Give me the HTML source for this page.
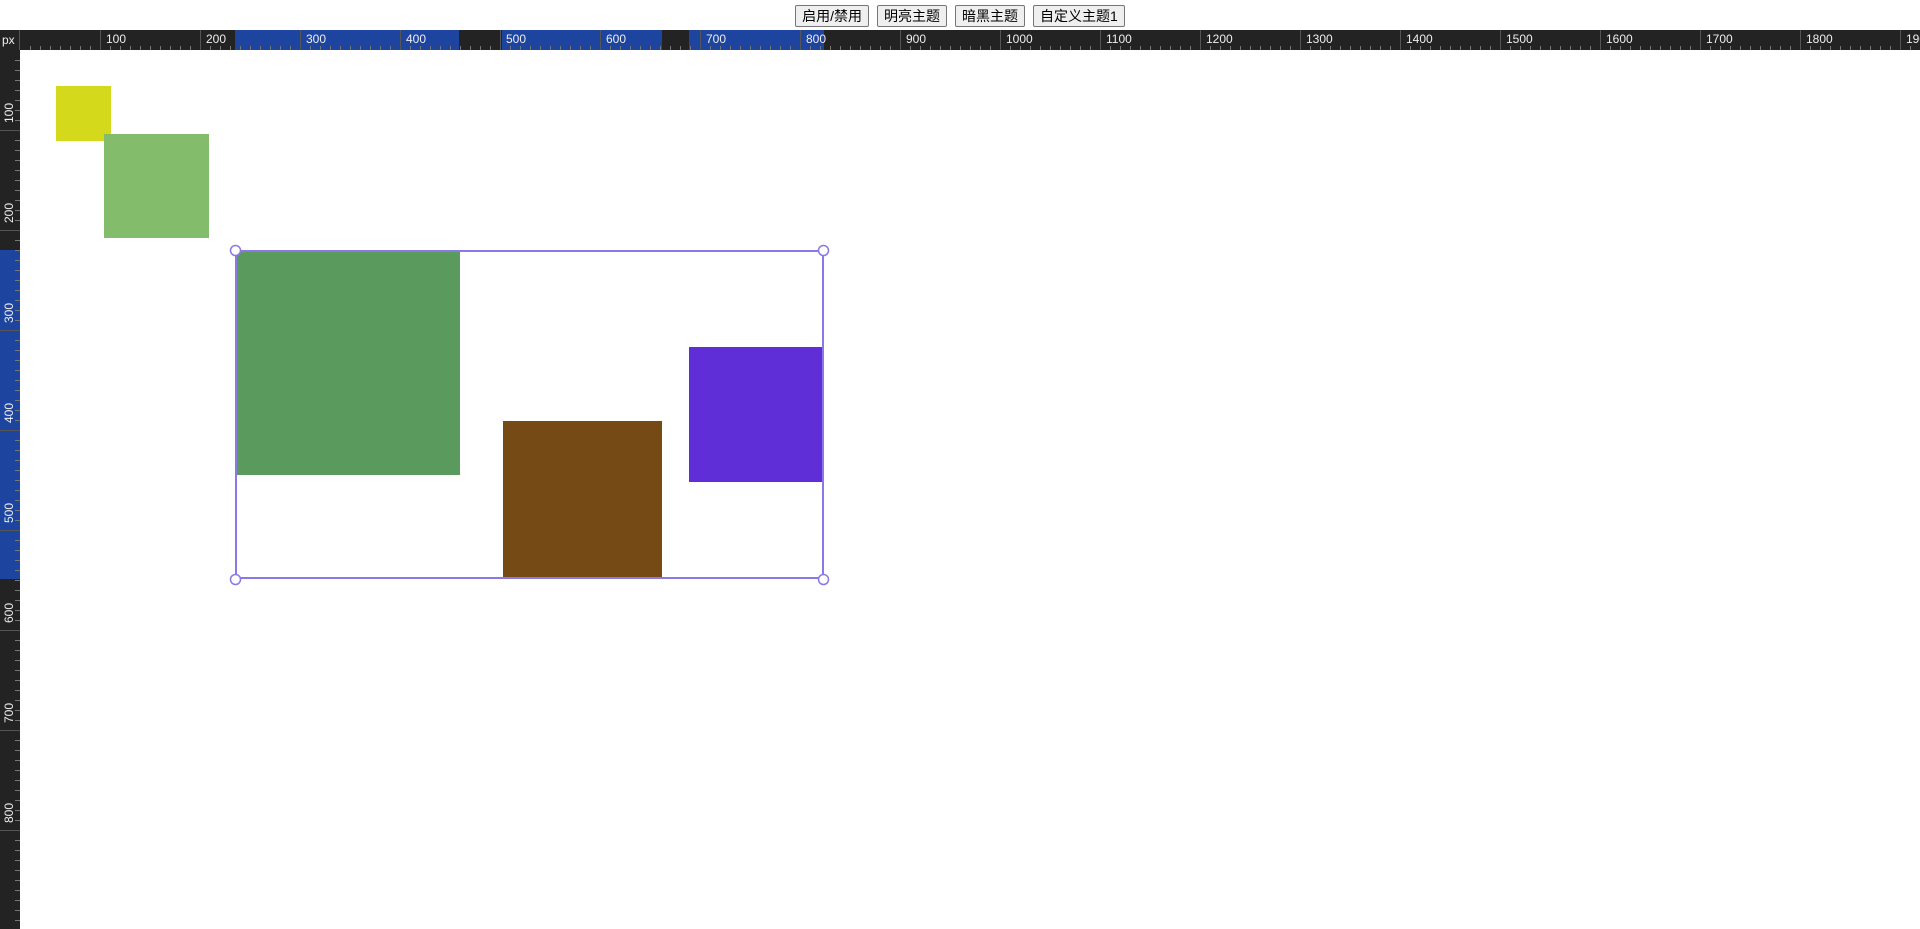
<!DOCTYPE html>
<html><head><meta charset="utf-8"><style>
html,body{margin:0;padding:0;width:1920px;height:929px;overflow:hidden;background:#fff;font-family:"Liberation Sans","Noto Sans CJK SC",sans-serif;}
.btns{position:absolute;top:5px;left:0;width:1920px;text-align:center;font-size:14px;}
.btns button{font-family:"Liberation Sans","Noto Sans CJK SC",sans-serif;font-size:14px;height:22px;padding:0 6px;margin:0 4px;border:1px solid #767676;border-radius:2px;background:#efefef;color:#000;}
#top{position:absolute;left:0;top:30px;width:1920px;height:20px;background:#232323;}
#left{position:absolute;left:0;top:50px;width:20px;height:879px;background:#232323;}
.hl{position:absolute;background:#1d45a0;}
.tk{position:absolute;background:#777;}
.lb{position:absolute;color:#eee;font-size:12px;}
.px{position:absolute;left:2px;top:33px;color:#eee;font-size:12px;}
.box{position:absolute;}
</style></head><body>
<div class="btns"><button>启用/禁用</button><button>明亮主题</button><button>暗黑主题</button><button>自定义主题1</button></div>
<div id="top">
<div class="hl" style="left:235px;width:224px;top:0;height:20px"></div>
<div class="hl" style="left:502px;width:160px;top:0;height:20px"></div>
<div class="hl" style="left:689px;width:135px;top:0;height:20px"></div>
</div>
<div id="left">
<div class="hl" style="top:200px;height:329px;left:0;width:20px"></div>
</div>
<div style="position:absolute;left:0;top:30px;width:20px;height:20px;background:#232323;border-right:1px solid #555;box-sizing:border-box"></div>
<div class="px">px</div>
<div id="marks"></div>
<div class="box" style="left:56px;top:86px;width:55px;height:55px;background:#d4da1b"></div>
<div class="box" style="left:104px;top:134px;width:105px;height:104px;background:#83bd6c"></div>
<div class="box" style="left:235px;top:250px;width:225px;height:225px;background:#5a9a5c"></div>
<div class="box" style="left:503px;top:421px;width:159px;height:158px;background:#764a14"></div>
<div class="box" style="left:689px;top:347px;width:135px;height:135px;background:#5f2ed6"></div>
<div class="box" style="left:235px;top:250px;width:589px;height:329px;border:2px solid #8a78e6;box-sizing:border-box"></div>
<svg style="position:absolute;left:0;top:0" width="1920" height="929">
<g fill="#fff" stroke="#8a78e6" stroke-width="1.5">
<circle cx="235.5" cy="250.5" r="5"/><circle cx="823.5" cy="250.5" r="5"/>
<circle cx="235.5" cy="579.5" r="5"/><circle cx="823.5" cy="579.5" r="5"/>
</g></svg>
<script>
var m=document.getElementById('marks'),h='';
for(var x=30;x<1920;x+=10){
 if(x%100==0){h+='<div class="tk" style="left:'+x+'px;top:30px;width:1px;height:20px;background:#555"></div>';
  h+='<div class="lb" style="left:'+(x+6)+'px;top:32px">'+x+'</div>';}
 else h+='<div class="tk" style="left:'+x+'px;top:46px;width:1px;height:4px"></div>';
}
for(var v=10;v<900;v+=10){
 var y=v+30;
 if(y<52) continue;
 if(v%100==0){h+='<div class="tk" style="top:'+y+'px;left:0;height:1px;width:20px;background:#555"></div>';
  h+='<div class="lb" style="left:-6px;top:'+(y-24)+'px;transform:rotate(-90deg);width:30px;text-align:center">'+v+'</div>';}
 else h+='<div class="tk" style="top:'+y+'px;left:15px;height:1px;width:5px"></div>';
}
m.innerHTML=h;
</script>
</body></html>
